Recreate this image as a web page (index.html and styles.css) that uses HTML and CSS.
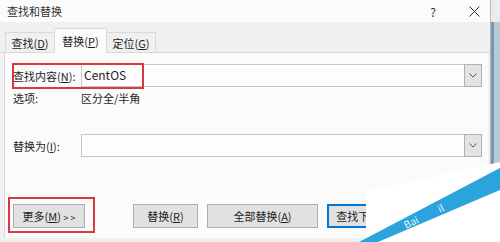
FILE: index.html
```html
<!DOCTYPE html>
<html lang="zh-CN">
<head>
    <meta charset="UTF-8">
    <title>查找和替换</title>
    <link rel="stylesheet" href="styles.css">
</head>
<body>
    <div class="window">
        <div class="dialog">
            <div class="titlebar">
                <span class="title">查找和替换</span>
                <span class="help">?</span>
                <svg class="close" width="11" height="11" viewBox="0 0 11 11">
                    <path d="M0.5 0.5 L10.5 10.5 M10.5 0.5 L0.5 10.5" stroke="#333" stroke-width="1" fill="none"/>
                </svg>
            </div>
            <div class="tabbar">
                <div class="tab tab-first">查找(<u>D</u>)</div>
                <div class="tab active">替换(<u>P</u>)</div>
                <div class="tab">定位(<u>G</u>)</div>
            </div>
            <div class="panel">
                <div class="row row-find">
                    <span class="label">查找内容(<u>N</u>):</span>
                    <div class="combo">
                        <span class="value">CentOS</span>
                        <span class="drop">
                            <svg width="8" height="5" viewBox="0 0 8 5"><polyline points="0.5,0.5 4,4 7.5,0.5" stroke="#555" fill="none"/></svg>
                        </span>
                    </div>
                    <div class="mark mark-find"></div>
                </div>
                <div class="row row-options">
                    <span class="label">选项:</span>
                    <span>区分全/半角</span>
                </div>
                <div class="row row-replace">
                    <span class="label">替换为(<u>I</u>):</span>
                    <div class="combo">
                        <span class="value"></span>
                        <span class="drop">
                            <svg width="8" height="5" viewBox="0 0 8 5"><polyline points="0.5,0.5 4,4 7.5,0.5" stroke="#555" fill="none"/></svg>
                        </span>
                    </div>
                </div>
                <div class="row buttons">
                    <button class="btn btn-more">更多(<u>M</u>) <span class="arrows">&gt; &gt;</span></button>
                    <button class="btn btn-replace">替换(<u>R</u>)</button>
                    <button class="btn btn-all">全部替换(<u>A</u>)</button>
                    <button class="btn btn-next default">查找下一处(<u>F</u>)</button>
                    <div class="mark mark-more"></div>
                </div>
            </div>
        </div>
        <div class="backdrop">
            <div class="backdrop-top"></div>
        </div>
        <svg class="watermark" width="150" height="82" viewBox="350 160 150 82">
            <polygon points="366,192 500,162 500,242 366,242" fill="#ffffff"/>
            <polygon points="359,242 500,168 500,190 378,242" fill="#2ba3dc"/>
            <text x="406" y="229" transform="rotate(-26 406 229)" fill="#e9f6fc" font-size="10">Bai</text>
            <text x="440" y="213" transform="rotate(-26 440 213)" fill="#e9f6fc" font-size="10">il</text>
        </svg>
    </div>
</body>
</html>
```

FILE: styles.css
```css
body {
    margin: 0;
    width: 500px;
    height: 242px;
    overflow: hidden;
    background: #f0f0f0;
    color: #1e1e1e;
    font-family: "Noto Sans CJK SC", sans-serif;
    font-size: 11px;
}
.window {
    position: relative;
    display: flex;
    height: 242px;
}
.dialog {
    width: 490px;
    display: flex;
    flex-direction: column;
    background: #f0f0f0;
    border-right: 1px solid #b9b9b9;
}
.backdrop {
    flex: 1;
    background: linear-gradient(to right, #7d95ab 0 3px, #b8c9d7 3px);
}
.backdrop-top {
    height: 22px;
    background: #e9edf0;
}
.titlebar {
    height: 22px;
    flex-shrink: 0;
    display: flex;
    align-items: center;
    padding-left: 7px;
    background: #fbfbfb;
    color: #333;
}
.title {
    flex: 1;
}
.help {
    margin-right: 33px;
    font-size: 12px;
}
.close {
    margin-right: 10px;
}
.tabbar {
    height: 31px;
    flex-shrink: 0;
    box-sizing: border-box;
    display: flex;
    align-items: flex-end;
    padding-left: 5px;
    border-bottom: 1px solid #d9d9d9;
}
.tab {
    height: 20px;
    box-sizing: border-box;
    display: flex;
    align-items: center;
    justify-content: center;
    width: 50px;
    border: 1px solid #d9d9d9;
    border-bottom: none;
    margin-right: -1px;
    background: #f0f0f0;
}
.tab.active {
    height: 25px;
    width: 53px;
    margin-bottom: -1px;
    background: #fbfbfb;
    position: relative;
}
.panel {
    flex: 1;
    margin: 0 2px 4px 4px;
    padding: 11px 0 0 8px;
    background: #fbfbfb;
    border-left: 1px solid #d9d9d9;
}
.row {
    position: relative;
    display: flex;
    align-items: center;
}
.label {
    width: 68px;
    flex-shrink: 0;
}
.combo {
    width: 401px;
    height: 23px;
    box-sizing: border-box;
    display: flex;
    border: 1px solid #c6c6c6;
    background: #fdfdfd;
}
.value {
    flex: 1;
    padding-left: 2px;
    line-height: 20px;
    font-size: 12px;
}
.drop {
    width: 16px;
    display: flex;
    align-items: center;
    justify-content: center;
    background: #e3e3e3;
    border: 1px solid #b0b0b0;
    margin: -1px -1px -1px 0;
}
.row-options {
    margin-top: 5px;
    height: 12px;
}
.row-replace {
    margin-top: 30px;
}
.buttons {
    margin-top: 47px;
}
.btn {
    height: 24px;
    box-sizing: border-box;
    border: 1px solid #adadad;
    background: #e1e1e1;
    font-family: inherit;
    font-size: 11px;
    color: #1e1e1e;
    padding: 0;
}
.arrows {
    font-size: 9px;
}
.btn-more {
    width: 72px;
    margin-right: 48px;
}
.btn-replace {
    width: 65px;
    margin-right: 9px;
}
.btn-all {
    width: 111px;
    margin-right: 9px;
}
.btn-next {
    width: 87px;
}
.btn.default {
    border: 2px solid #0078d7;
}
.mark {
    position: absolute;
    box-sizing: border-box;
    border: 2px solid #d63a40;
}
.mark-find {
    left: -1px;
    top: -1px;
    width: 132px;
    height: 26px;
}
.mark-more {
    left: -5px;
    top: -7px;
    width: 87px;
    height: 36px;
}
.watermark {
    position: absolute;
    right: 0;
    bottom: 0;
}
```
